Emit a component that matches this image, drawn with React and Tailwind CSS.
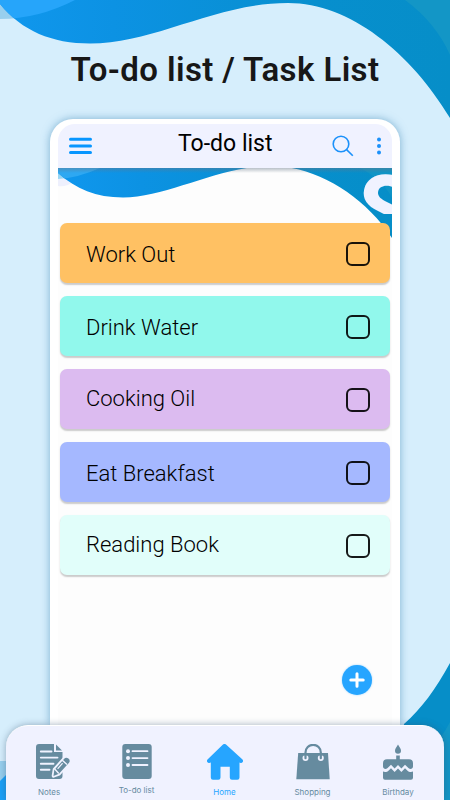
const TASKS = [
  { title: "Work Out", color: "bg-[#ffc163]", text: "pt-[5px]" },
  { title: "Drink Water", color: "bg-[#91f8ec]", text: "pt-[5px]" },
  { title: "Cooking Oil", color: "bg-[#dcbbf0]", text: "pt-px" },
  { title: "Eat Breakfast", color: "bg-[#a5b8ff]", text: "pt-[5px]" },
  { title: "Reading Book", color: "bg-[#e1fefa]", text: "pt-px" },
];

const NAV = [
  { label: "Notes", icon: NotesIcon, width: "w-[86px]", color: "text-[#668b9f]", text: "mt-[7px]" },
  { label: "To-do list", icon: ListIcon, width: "w-[89px]", color: "text-[#668b9f]", text: "mt-[5px]" },
  { label: "Home", icon: HomeIcon, width: "w-[87px]", color: "text-[#26a5ff]", text: "mt-[7px]" },
  { label: "Shopping", icon: BagIcon, width: "w-[89px]", color: "text-[#668b9f]", text: "mt-[7px]" },
  { label: "Birthday", icon: CakeIcon, width: "w-[82px]", color: "text-[#668b9f]", text: "mt-[7px]" },
];

function NotesIcon() {
  return (
    <svg className="ml-[7px] h-9 w-[34px]" viewBox="0 0 34 36">
      <path d="M3 0H18V8H26.5V32a3 3 0 0 1-3 3H3a3 3 0 0 1-3-3V3a3 3 0 0 1 3-3Z" fill="currentColor" />
      <path d="M20 0.5 26 6.5H20Z" fill="currentColor" />
      <path d="M4.8 7.5H15.5M4.8 13.6H21.5M4.8 19.7H17.5M4.8 25.8H13.5" stroke="#f0f2ff" strokeWidth="1.9" strokeLinecap="round" />
      <path d="M17.5 31.8 18.5 25.5 28 15a2.8 2.8 0 0 1 4.6 4L23 29.7Z" fill="currentColor" stroke="#f0f2ff" strokeWidth="3.6" strokeLinejoin="round" />
      <path d="M18.3 26 28 15a2.8 2.8 0 0 1 4.8 4L23 29.7 17.5 32Z" fill="currentColor" />
      <path d="M26.3 16.2 31 20.6M18.7 25 22.8 29.4" stroke="#f0f2ff" strokeWidth="1.4" />
      <path d="M26.2 19.6 22 24.4" stroke="#f0f2ff" strokeWidth="1.3" strokeLinecap="round" />
    </svg>
  );
}

function ListIcon() {
  return (
    <svg className="h-9 w-[30px]" viewBox="0 0 30 36">
      <rect x="0.3" width="29.4" height="35" rx="3" fill="currentColor" />
      <g fill="#f0f2ff">
        <circle cx="6" cy="7.2" r="2" />
        <circle cx="6" cy="14.1" r="2" />
        <circle cx="6" cy="21" r="2" />
      </g>
      <path d="M10.5 7.2H25.5M10.5 14.1H25.5M10.5 21H25.5" stroke="#f0f2ff" strokeWidth="1.8" strokeLinecap="round" />
    </svg>
  );
}

function HomeIcon() {
  return (
    <svg className="h-9 w-[38px]" viewBox="0 0 38 36">
      <path
        d="M17.2 0.8a2.6 2.6 0 0 1 3.6 0L37 15.6c.8.8.7 1.7.2 2.5-.6.9-1.6 1.2-2.6.7L34 18.4V33.5a2.2 2.2 0 0 1-2.2 2.2H26.5a2.2 2.2 0 0 1-2.2-2.2V22.8H15V33.5a2.2 2.2 0 0 1-2.2 2.2H7.5a2.2 2.2 0 0 1-2.2-2.2V18.4l-.9.4c-1 .5-2 .2-2.6-.7-.5-.8-.6-1.700.2-2.500Z"
        fill="currentColor"
        transform="translate(-.5 0)"
      />
    </svg>
  );
}

function BagIcon() {
  return (
    <svg className="h-9 w-[34px]" viewBox="0 0 34 36">
      <path d="M2.2 9H32L33.7 35.2H.3Z" fill="currentColor" />
      <circle cx="9.5" cy="13.9" r="3" fill="#f0f2ff" />
      <circle cx="24.8" cy="13.9" r="3" fill="#f0f2ff" />
      <path d="M6 9H13V11.6H6ZM21.3 9H28.3V11.6H21.3Z" fill="currentColor" />
      <path d="M9.5 14.2V8.5a7.65 7.65 0 0 1 15.3 0V14.2" fill="none" stroke="currentColor" strokeWidth="2.2" strokeLinecap="round" />
    </svg>
  );
}

function CakeIcon() {
  return (
    <svg className="h-9 w-[30px]" viewBox="0 0 30 36" fill="currentColor">
      <path d="M15 .5c1.7 3 3 4.3 3 6.2a3 3 0 0 1-6 0C12 4.8 13.3 3.5 15 .5Z" />
      <path d="M13.2 11.5h3.6v3.7H26a4 4 0 0 1 4 4v3.3c0 2.2-2.6 3.4-4.3 1.7L22 20.8l-3.6 3.6L15 21l-3.4 3.4L8 20.8l-3.7 3.4C2.6 25.9 0 24.7 0 22.5v-3.3a4 4 0 0 1 4-4h9.2Z" />
      <path d="M0 27.6c2.2.8 4.2.3 5.7-1.2L8 24.3l3.6 3.6L15 24.5l3.4 3.4L22 24.3l2.3 2.1c1.5 1.5 3.5 2 5.7 1.2v6.2a2 2 0 0 1-2 2H2a2 2 0 0 1-2-2Z" />
    </svg>
  );
}

function Backdrop() {
  return (
    <svg className="absolute inset-0 h-[800px] w-[450px]" viewBox="0 0 450 800">
      <defs>
        <linearGradient id="wave" x1="0" x2="1" y1="0" y2="0">
          <stop offset="0" stopColor="#1097ee" />
          <stop offset=".25" stopColor="#0c92e3" />
          <stop offset=".7" stopColor="#078fce" />
          <stop offset="1" stopColor="#068ec8" />
        </linearGradient>
        <clipPath id="waveClip">
          <path d="M0 0V4C22 31 52 43.5 90 43.5C155 43.5 215 3 288 3C350 3 411 53 450 118V0Z" />
        </clipPath>
      </defs>
      <path d="M0 0V19Q38 19 75 0Z" fill="#98cfee" />
      <g clipPath="url(#waveClip)">
        <rect width="450" height="120" fill="url(#wave)" />
        <path d="M0 0V19Q38 19 75 0Z" fill="#26a5fa" />
        <path d="M405 0Q436 23 450 55V0Z" fill="#1396c6" />
      </g>
      <path d="M0 761H30V800H0Z" fill="#98cfee" />
      <path d="M0 781L12 769V800H0Z" fill="#1ba0f7" />
      <path d="M450 663C435 690 422 708 404 724L390 800H450Z" fill="#068ec8" />
      <path d="M450 722Q446 730 440 738V800H450Z" fill="#1396c6" />
    </svg>
  );
}

function Banner() {
  return (
    <div className="absolute inset-x-0 top-0 h-[70px] overflow-hidden">
      <svg className="absolute inset-0 h-[70px] w-[334px]" viewBox="0 0 334 70">
        <defs>
          <linearGradient id="shade" x1="0" x2="0" y1="0" y2="1">
            <stop offset="0" stopColor="#667788" stopOpacity=".45" />
            <stop offset="1" stopColor="#667788" stopOpacity="0" />
          </linearGradient>
          <clipPath id="bannerClip">
            <path d="M0 0V5C18 21 38 29.5 65 29.5C110 29.5 160 -2 213 -2C257 -2 305 26 334 70V0Z" />
          </clipPath>
        </defs>
        <path d="M0 8H26L10 17Q4 19 0 18Z" fill="#eef0fd" />
        <path d="M0 0V11Q18 10 42 0Z" fill="#98d5f3" />
        <g clipPath="url(#bannerClip)">
          <rect width="334" height="70" fill="url(#wave)" />
          <path d="M0 0V11Q20 10 42 0Z" fill="#2ea8f2" />
          <path d="M302 0Q325 12 334 30V0Z" fill="#0f94c6" />
        </g>
        <rect width="334" height="5" fill="url(#shade)" />
      </svg>
      <div className="absolute top-0 right-0 h-[46px] w-[30px] overflow-hidden">
        <span className="absolute top-[-5px] left-[-7px] rotate-[12deg] font-[Inter] text-[92px] leading-[92px] font-bold text-[#f0f2ff]">S</span>
      </div>
    </div>
  );
}

function TaskRow({ task }) {
  return (
    <li className={`flex h-[60.5px] items-center justify-between rounded-[7px] pl-[26px] pr-5 shadow-[0_1.5px_1.5px_rgba(0,0,0,0.2)] ${task.color}`}>
      <span className={`text-[22px] leading-7 font-[340] text-black ${task.text}`}>{task.title}</span>
      <span className="mt-[2px] size-6 rounded-[6px] border-2 border-black/90" />
    </li>
  );
}

export default function App() {
  return (
    <div className="relative flex h-[800px] w-[450px] flex-col overflow-hidden bg-[#d6eefc] font-[Roboto,sans-serif]">
      <Backdrop />
      <h1 className="relative mt-[50px] h-10 text-center text-[33px] leading-10 font-semibold tracking-[0.4px] whitespace-nowrap text-[#171717]">
        To-do list / Task List
      </h1>

      <main className="relative mx-auto mt-[29px] flex w-[350px] flex-1 flex-col rounded-t-[23px] bg-white px-2 pt-[5px] shadow-[0_0_9px_rgba(50,125,175,0.55)]">
        <header className="flex h-11 items-center rounded-t-[17px] bg-[#f0f2ff] pr-[10px] pl-[11px]">
          <svg className="h-[18px] w-[23px]" viewBox="0 0 23 18">
            <path d="M1.5 2.2H21.5M1.5 9H21.5M1.5 15.6H21.5" stroke="#0796ff" strokeWidth="3" strokeLinecap="round" />
          </svg>
          <div className="flex-1 pb-[4px] pl-[86px] text-[23px] leading-7 text-black">To-do list</div>
          <svg className="mr-[22px] size-[22px]" viewBox="0 0 22 22" fill="none" stroke="#1b91fa" strokeWidth="1.6">
            <circle cx="9" cy="9" r="7.8" />
            <path d="M14.6 14.6 20.8 20.8" />
          </svg>
          <svg className="h-[18px] w-[6px]" viewBox="0 0 6 18" fill="#1b91fa">
            <circle cx="3" cy="2.5" r="2" />
            <circle cx="3" cy="9" r="2" />
            <circle cx="3" cy="15.5" r="2" />
          </svg>
        </header>

        <section className="relative flex-1 bg-[#fdfdfd]">
          <Banner />
          <ul className="relative mx-[2px] flex flex-col gap-[12.5px] pt-[54.5px]">
            {TASKS.map((task) => (
              <TaskRow key={task.title} task={task} />
            ))}
          </ul>
          <button className="absolute top-[497px] left-[284px] flex size-[30px] items-center justify-center rounded-full bg-[#26a5ff] shadow-[0_0_2px_rgba(38,165,255,0.5)]">
            <svg className="size-4" viewBox="0 0 16 16">
              <path d="M8 1.8V14.2M1.8 8H14.2" stroke="#fff" strokeWidth="3" strokeLinecap="round" />
            </svg>
          </button>
        </section>
      </main>

      <nav className="relative mx-[6px] flex h-[75px] shrink-0 rounded-t-[22px] border-t border-white bg-[#f0f2ff] pt-[18px] shadow-[0_0_7px_rgba(50,80,110,0.45)]">
        {NAV.map(({ label, icon: Icon, width, color, text }) => (
          <div key={label} className={`flex flex-col items-center ${width} ${color}`}>
            <Icon />
            <span className={`font-[Inter] text-[8px] leading-[10px] ${text}`}>{label}</span>
          </div>
        ))}
      </nav>
    </div>
  );
}
